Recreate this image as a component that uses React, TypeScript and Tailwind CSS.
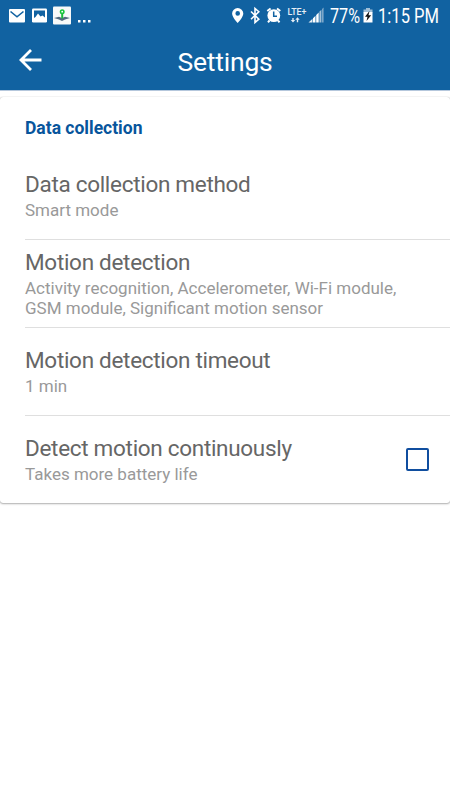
import { useState } from 'react';

interface SettingRowProps {
  title: string;
  summary: string;
  last?: boolean;
  children?: React.ReactNode;
}

function StatusBar() {
  return (
    <div className="flex h-8 items-center text-white">
      {/* Notifications */}
      <svg width="95" height="32" viewBox="0 0 95 32" className="shrink-0">
        <rect x="9" y="9" width="16" height="13.5" rx="1" fill="#fff" />
        <path d="M10.5 11.5 17 16.8l6.5-5.3" fill="none" stroke="#1162a1" strokeWidth="1.6" />
        <rect x="32" y="8.5" width="15" height="14" rx="1.2" fill="#fff" />
        <path d="M34 10.5h11v7l-2.500-2-2 1-2.500-3-2.500 3.500-1.500 1z" fill="#1162a1" />
        <rect x="53" y="6.500" width="18" height="18" rx="1" fill="#f7f9f9" />
        <path d="m54 18 5-1.200 3 1.200 3-1.200 5 1.200-5 1.500-3 1.500-3-1.500z" fill="#526b80" />
        <path d="M62.2 13v5.500" stroke="#18b83c" strokeWidth="2" />
        <circle cx="62.2" cy="11.7" r="1.7" fill="#fff" stroke="#18c53c" strokeWidth="1.6" />
        <path d="M78 20h2.500v2.500H78zM83 20h2.500v2.500H83zM88 20h2.500v2.500H88z" fill="#fff" />
      </svg>

      {/* Radios and alarm */}
      <svg width="99" height="32" viewBox="230 0 99 32" className="ml-[135px] shrink-0">
        <path
          d="M237.700 8a5.600 5.600 0 0 0-5.600 5.600c0 3.900 5.600 9.400 5.600 9.400s5.600-5.500 5.600-9.400a5.600 5.600 0 0 0-5.600-5.600zm0 3.100a2.300 2.300 0 1 1 0 4.600 2.300 2.300 0 0 1 0-4.600z"
          fill="#fff"
        />
        <path d="m251 11.500 7.800 7.700-3.800 3.300V8.500l3.800 3.200-7.800 7.600" fill="none" stroke="#fff" strokeWidth="1.6" />
        <path d="m267.300 11 3.300-2.500M280.300 11l-3.300-2.500M269.500 20.500l-1.500 1.800M278 20.500l1.500 1.800" stroke="#fff" strokeWidth="2" />
        <circle cx="273.800" cy="15.600" r="6.400" fill="#fff" />
        <path d="M273.700 11.500v4.700h3.300" fill="none" stroke="#1162a1" strokeWidth="1.500" />
        <text x="287.500" y="15" fill="#e6eef5" fontSize="8.500" fontWeight="500" fontFamily="Roboto, sans-serif" textLength="19" lengthAdjust="spacingAndGlyphs">
          LTE+
        </text>
        <path d="M292.300 18v2h-1.500l2.200 2.500 2.200-2.500h-1.500v-2zM297.500 17.300l2.200 2.500h-1.500v2.500h-1.400v-2.500h-1.500z" fill="#e6eef5" />
        <path d="M308.500 22.500 312.500 18.700v3.800z" fill="#e6eef5" />
        <path d="M313 18.200l2.500-2.400v6.700H313zM316.200 15l2.500-2.500v10h-2.500z" fill="#fff" />
        <path d="M319.400 11.800l2-2v12.700h-2z" fill="#a4c2da" />
        <path d="M322 9l1.600-1.600v15.100H322z" fill="#7ca7c9" />
      </svg>
      <span className="ml-px w-[32px] shrink-0 pt-0.5 whitespace-nowrap">
        <span className="inline-block origin-left scale-x-[0.83] text-[19.5px] leading-8">77%</span>
      </span>
      <svg width="14" height="32" viewBox="0 0 14 32" className="shrink-0">
        <path d="M4 8h4v1.500h2.500v3h-9v-3H4z" fill="#9fbed7" />
        <path d="M1.500 12h9v10.500h-9z" fill="#fff" />
        <path d="M7.500 11 3 16.800h2.500L4.500 21l4.700-5.800H6.500z" fill="#111" />
      </svg>
      <span className="ml-[2px] pt-0.5 whitespace-nowrap">
        <span className="inline-block origin-left scale-x-[0.85] text-[19.5px] leading-8">1:15 PM</span>
      </span>
    </div>
  );
}

function SettingRow({ title, summary, last = false, children }: SettingRowProps) {
  return (
    <div className={last ? 'ml-[25px] flex h-[88px] items-center' : 'ml-[25px] flex h-[88px] items-center border-b border-[#dfdfdf]'}>
      <div className="w-[380px] shrink-0 pb-0.5">
        <h2 className="pb-px text-[22.5px] leading-[29px] tracking-[-0.3px] text-[#666]">{title}</h2>
        <p className="text-[17px] leading-5 text-[#999]">{summary}</p>
      </div>
      {children}
    </div>
  );
}

export default function App() {
  const [continuous, setContinuous] = useState(false);

  return (
    <div className="h-[800px] w-[450px] overflow-hidden bg-white font-[Roboto,sans-serif]">
      <header className="h-[91px] border-b border-[#b5c7dc] bg-[#1162a1] text-white">
        <StatusBar />
        <div className="grid h-[58px] grid-cols-[60px_1fr_60px] items-center">
          <button aria-label="Back" className="pl-[18px]">
            <svg width="25" height="24" viewBox="0 0 25 24" fill="none" stroke="#fff" strokeWidth="2.8" className="-mt-0.5">
              <path d="M23.500 12H3M13 2 3 12l10 10" />
            </svg>
          </button>
          <h1 className="pt-0.5 text-center text-[26.5px] leading-8 tracking-[-0.2px]">Settings</h1>
        </div>
      </header>

      <main className="mt-[6px] h-[406px] rounded-[3px] bg-white shadow-[0_1px_2px_rgba(0,0,0,0.3),0_0_1px_rgba(0,0,0,0.3)]">
        <h3 className="h-[55px] pt-[21px] pl-[25px] text-[17.5px] leading-[21px] font-bold text-[#07559c]">Data collection</h3>
        <SettingRow title="Data collection method" summary="Smart mode" />
        <SettingRow title="Motion detection" summary="Activity recognition, Accelerometer, Wi-Fi module, GSM module, Significant motion sensor" />
        <SettingRow title="Motion detection timeout" summary="1 min" />
        <SettingRow title="Detect motion continuously" summary="Takes more battery life" last>
          <button
            role="checkbox"
            aria-label="Detect motion continuously"
            aria-checked={continuous}
            onClick={() => setContinuous(!continuous)}
            className={
              continuous
                ? 'mb-0.5 ml-px size-[23px] rounded-[2px] border-2 border-[#104e9f] bg-[#104e9f]'
                : 'mb-0.5 ml-px size-[23px] rounded-[2px] border-2 border-[#104e9f]'
            }
          />
        </SettingRow>
      </main>
    </div>
  );
}
